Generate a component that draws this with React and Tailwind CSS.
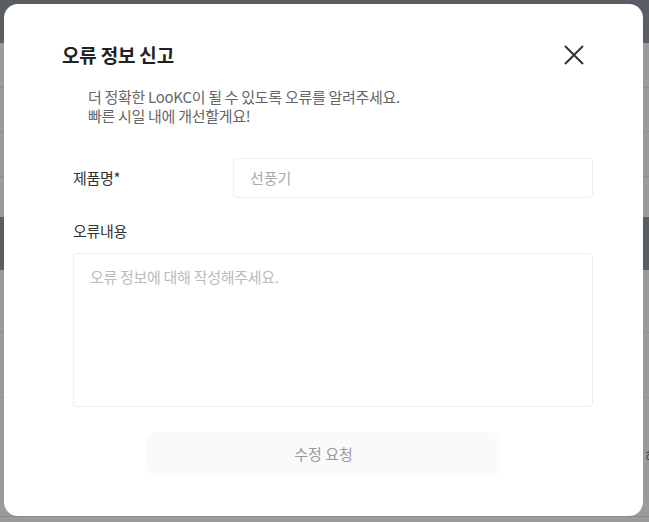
export default function App() {
  const font = { fontFamily: '"Noto Sans CJK KR", "Noto Sans", sans-serif' };
  return (
    <div className="relative w-[649px] h-[522px] overflow-hidden bg-[#9b9b9b]" style={font}>
      {/* background page under overlay */}
      <div className="flex flex-col">
        <div className="h-[43px] bg-[#5a5d64]" />
        <div className="h-[45px] border-b border-[#8e8e8e]" />
        <div className="h-[44px] border-b border-[#8e8e8e]" />
        <div className="h-[45px] border-b border-[#8e8e8e]" />
        <div className="h-[40px]" />
        <div className="h-[53px] bg-[#5a5d64]" />
        <div className="h-[63px] border-b border-[#8e8e8e]" />
        <div className="h-[65px] border-b border-[#8e8e8e]" />
        <div className="h-[45px] flex justify-end items-center pt-[58px]">
          <span className="text-[13px] text-[#444] mr-[-8px]">하</span>
        </div>
      </div>
      <div className="absolute left-0 right-0 top-[516px] h-[1px] bg-[#8a8a8a]" />

      {/* modal */}
      <div className="absolute left-[4px] top-[4px] w-[639px] h-[512px] rounded-[14px] bg-white flex flex-col">
        <div className="flex items-center justify-between pl-[58px] pr-[58px] pt-[38px]">
          <h1 className="text-[19px] font-bold text-[#222] leading-[26px] tracking-[-0.2px]">오류 정보 신고</h1>
          <button className="w-[24px] h-[24px] flex items-center justify-center text-[#333] mr-[-1px]">
            <svg width="20" height="20" viewBox="0 0 20 20" fill="none" stroke="currentColor" strokeWidth="2">
              <path d="M1 1L19 19M19 1L1 19" />
            </svg>
          </button>
        </div>
        <p className="pl-[84px] mt-[19px] text-[15px] leading-[19px] text-[#666] tracking-[-0.3px]">
          더 정확한 LooKC이 될 수 있도록 오류를 알려주세요.<br />빠른 시일 내에 개선할게요!
        </p>
        <div className="flex items-center pl-[69px] pr-[50px] mt-[33px]">
          <label className="w-[160px] text-[15px] text-[#333] tracking-[-0.3px]">제품명*</label>
          <div className="flex-1 h-[40px] rounded-[4px] border border-[#eeeeee] flex items-center px-[16px] text-[15px] text-[#aaa]">
            선풍기
          </div>
        </div>
        <div className="pl-[69px] pr-[50px] mt-[22px]">
          <div className="text-[15px] text-[#333] tracking-[-0.3px] leading-[22px]">오류내용</div>
          <div className="mt-[11px] h-[154px] rounded-[4px] border border-[#eeeeee] px-[16px] pt-[12px] text-[15px] text-[#bbb] tracking-[-0.3px]">
            오류 정보에 대해 작성해주세요.
          </div>
        </div>
        <div className="flex justify-center mt-[25px]">
          <button className="w-[353px] h-[44px] rounded-[8px] bg-[#fafafa] text-[15px] text-[#999]">수정 요청</button>
        </div>
      </div>
    </div>
  );
}
